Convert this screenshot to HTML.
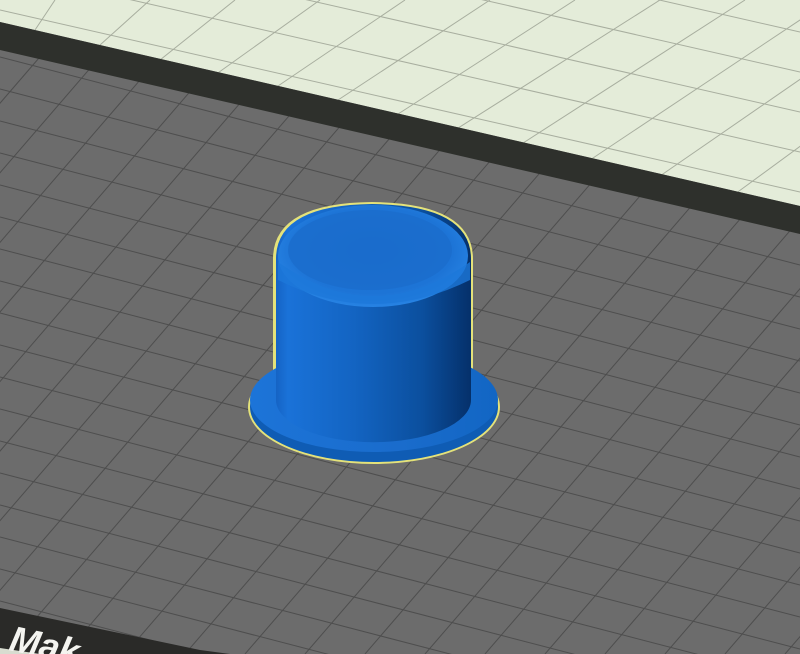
<!DOCTYPE html>
<html><head><meta charset="utf-8"><style>
html,body{margin:0;padding:0;background:#6c6c6c;overflow:hidden;width:800px;height:654px}
svg{display:block}
</style></head><body>
<svg width="800" height="654" viewBox="0 0 800 654" xmlns="http://www.w3.org/2000/svg">
<defs>
<linearGradient id="cyl" x1="0" x2="1" y1="0" y2="0">
<stop offset="0" stop-color="#1563c4"/>
<stop offset="0.06" stop-color="#1a72d8"/>
<stop offset="0.4" stop-color="#1364c2"/>
<stop offset="0.75" stop-color="#0b4f9e"/>
<stop offset="1" stop-color="#05306a"/>
</linearGradient>
<radialGradient id="top" cx="0.5" cy="0.45" r="0.6">
<stop offset="0" stop-color="#1a6ccc"/>
<stop offset="0.7" stop-color="#1d74d6"/>
<stop offset="1" stop-color="#2a88e8"/>
</radialGradient>
<linearGradient id="brim" x1="0" x2="1">
<stop offset="0" stop-color="#1c74d8"/>
<stop offset="0.6" stop-color="#1a6ccc"/>
<stop offset="1" stop-color="#1266c4"/>
</linearGradient>
</defs>
<rect width="800" height="654" fill="#6c6c6c"/>
<g stroke="#4e4e4e" stroke-width="1" fill="none">
<line x1="0" y1="57" x2="800" y2="265"/>
<line x1="0" y1="89" x2="800" y2="297"/>
<line x1="0" y1="121" x2="800" y2="329"/>
<line x1="0" y1="153" x2="800" y2="361"/>
<line x1="0" y1="185" x2="800" y2="393"/>
<line x1="0" y1="217" x2="800" y2="425"/>
<line x1="0" y1="249" x2="800" y2="457"/>
<line x1="0" y1="281" x2="800" y2="489"/>
<line x1="0" y1="313" x2="800" y2="521"/>
<line x1="0" y1="345" x2="800" y2="553"/>
<line x1="0" y1="377" x2="800" y2="585"/>
<line x1="0" y1="409" x2="800" y2="617"/>
<line x1="0" y1="441" x2="800" y2="649"/>
<line x1="0" y1="473" x2="800" y2="681"/>
<line x1="0" y1="505" x2="800" y2="713"/>
<line x1="0" y1="537" x2="800" y2="745"/>
<line x1="0" y1="569" x2="800" y2="777"/>
<line x1="0" y1="601" x2="800" y2="809"/>
<line x1="0" y1="633" x2="800" y2="841"/>
<line x1="0" y1="25" x2="800" y2="233"/>
</g>
<g stroke="#4e4e4e" stroke-width="1" fill="none">
<line x1="29" y1="0" x2="-535" y2="654"/>
<line x1="89" y1="0" x2="-475" y2="654"/>
<line x1="149" y1="0" x2="-415" y2="654"/>
<line x1="209" y1="0" x2="-355" y2="654"/>
<line x1="269" y1="0" x2="-295" y2="654"/>
<line x1="329" y1="0" x2="-235" y2="654"/>
<line x1="389" y1="0" x2="-175" y2="654"/>
<line x1="449" y1="0" x2="-115" y2="654"/>
<line x1="509" y1="0" x2="-55" y2="654"/>
<line x1="569" y1="0" x2="5" y2="654"/>
<line x1="629" y1="0" x2="65" y2="654"/>
<line x1="689" y1="0" x2="125" y2="654"/>
<line x1="749" y1="0" x2="185" y2="654"/>
<line x1="809" y1="0" x2="245" y2="654"/>
<line x1="869" y1="0" x2="305" y2="654"/>
<line x1="929" y1="0" x2="365" y2="654"/>
<line x1="989" y1="0" x2="425" y2="654"/>
<line x1="1049" y1="0" x2="485" y2="654"/>
<line x1="1109" y1="0" x2="545" y2="654"/>
<line x1="1169" y1="0" x2="605" y2="654"/>
<line x1="1229" y1="0" x2="665" y2="654"/>
<line x1="1289" y1="0" x2="725" y2="654"/>
<line x1="1349" y1="0" x2="785" y2="654"/>
</g>
<!-- light plate -->
<polygon points="0,0 800,0 800,206 0,22" fill="#e4ecd9"/>
<g stroke="#a8ae9f" stroke-width="1" fill="none">
<line x1="0" y1="10" x2="800" y2="192"/>
<line x1="0" y1="-30" x2="800" y2="152"/>
<line x1="0" y1="-70" x2="800" y2="112"/>
<line x1="0" y1="-110" x2="800" y2="72"/>
<line x1="0" y1="-150" x2="800" y2="32"/>
<line x1="0" y1="-190" x2="800" y2="-8"/>
<line x1="55" y1="0" x2="35" y2="30"/>
<line x1="150" y1="0" x2="100" y2="45"/>
<line x1="235" y1="0" x2="160" y2="60"/>
<line x1="320" y1="0" x2="215" y2="75"/>
<line x1="405" y1="0" x2="275" y2="88"/>
<line x1="490" y1="0" x2="335" y2="102"/>
<line x1="575" y1="0" x2="395" y2="116"/>
<line x1="660" y1="0" x2="455" y2="130"/>
<line x1="745" y1="0" x2="520" y2="145"/>
<line x1="830" y1="0" x2="590" y2="160"/>
<line x1="915" y1="0" x2="660" y2="176"/>
<line x1="1000" y1="0" x2="735" y2="194"/>
</g>
<polygon points="0,22 800,206 800,234 0,50" fill="#2e302c"/>
<!-- bottom dark band -->
<polygon points="0,608 200,650 230,654 0,654" fill="#2a2a28"/>
<polygon points="0,648 40,654 0,654" fill="#d8dcd0"/>
<text x="8" y="650" transform="rotate(12 8 650)" font-family="Liberation Sans, sans-serif" font-weight="bold" font-style="italic" font-size="36" fill="#f4f4f0">Mak</text>

<!-- hat outline -->
<ellipse cx="374" cy="407" rx="126" ry="57" fill="#e4e27a"/>
<path d="M273,407 L273,258 Q274,203 372,202 Q472,203 473,258 L473,407 Z" fill="#e4e27a"/>
<ellipse cx="374" cy="407" rx="124" ry="55" fill="#0f5cb4"/>
<ellipse cx="374" cy="400" rx="124" ry="52" fill="url(#brim)"/>
<path d="M276,400 L276,258 Q277,205 372,204 Q470,205 471,258 L471,400 A97,42 0 0 1 276,400 Z" fill="url(#cyl)"/>
<ellipse cx="373" cy="256" rx="95" ry="51" fill="url(#top)"/>
<ellipse cx="370" cy="250" rx="82" ry="40" fill="#1b6ccb" opacity="0.75"/>
<path d="M278,262 Q373,330 470,262 L470,280 Q373,328 278,280 Z" fill="#1d78da" opacity="0.8"/>
</svg>
</body></html>
